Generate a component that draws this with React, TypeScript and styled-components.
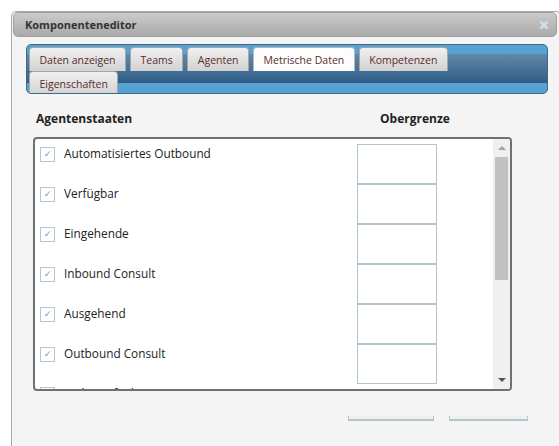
import styled, { createGlobalStyle } from "styled-components";

const GlobalStyle = createGlobalStyle`
  html, body {
    margin: 0;
    padding: 0;
    background: #fff;
    overflow: hidden;
  }
  body {
    font-family: "Open Sans", "Liberation Sans", sans-serif;
  }
`;

const Dialog = styled.div`
  margin: 11px 0 0 11px;
  width: 544px;
  height: 460px;
  padding: 0 3px 0 1px;
  box-sizing: content-box;
  border: 1px solid #a9a9a9;
  border-radius: 5px 5px 0 0;
  background: #f4f4f4;
`;

const TitleBar = styled.div`
  height: 25px;
  box-sizing: border-box;
  display: flex;
  align-items: center;
  justify-content: space-between;
  padding: 0 7px 0 11px;
  border: 1px solid #a0a0a0;
  border-radius: 5px;
  background: linear-gradient(to bottom, #cbcbcb, #a9a9a9);
`;

const Title = styled.span`
  font-size: 11px;
  font-weight: 700;
  color: #333;
`;

/* tabs wrap after "Kompetenzen" like the original widget */
const TabStrip = styled.div`
  margin: 7px 9px 0 13px;
  height: 50px;
  box-sizing: border-box;
  padding: 2px 80px 0 2px;
  border: 1px solid #3d6890;
  border-radius: 5px;
  overflow: hidden;
  display: flex;
  flex-wrap: wrap;
  align-content: flex-start;
  column-gap: 4px;
  background: linear-gradient(
    to bottom,
    #56a3d2 0,
    #56a3d2 9px,
    #6388a8 9px,
    #2f5d87 38px,
    #56a3d2 38px
  );
`;

const Tab = styled.div<{ $active?: boolean }>`
  height: 24px;
  box-sizing: border-box;
  display: flex;
  align-items: center;
  padding: 0 9.5px;
  font-size: 10.5px;
  color: #5a2b2b;
  border: 1px solid ${(p) => (p.$active ? "#b9b9b9" : "#a6a6a6")};
  border-bottom: none;
  border-radius: 4px 4px 0 0;
  background: ${(p) =>
    p.$active ? "#fdfdfd" : "linear-gradient(to bottom, #f0f0f0, #d2d2d2)"};
`;

const Content = styled.div`
  margin-left: 20px;
`;

const HeaderRow = styled.div`
  display: grid;
  grid-template-columns: 344px auto;
  padding-left: 3px;
  margin: 17px 0 10px;
  line-height: 16px;
  font-size: 12px;
  font-weight: 700;
  color: #222;
`;

const ListBox = styled.div`
  width: 479px;
  height: 254px;
  box-sizing: border-box;
  border: 2px solid #707070;
  border-radius: 4px;
  background: #fff;
  display: flex;
  overflow: hidden;
`;

const Rows = styled.div`
  flex: 1;
  padding: 5px 0 0 5px;
  overflow: hidden;
`;

const Row = styled.div`
  display: grid;
  grid-template-columns: 24px 293px 80px;
  height: 40px;
  align-items: start;
`;

const Check = styled.span`
  margin-top: 3px;
  width: 15px;
  height: 15px;
  box-sizing: border-box;
  border: 1px solid #b7c7d1;
  display: flex;
  align-items: center;
  justify-content: center;
  font-size: 9px;
  line-height: 1;
  color: #5b9bd0;
  font-family: "DejaVu Sans", sans-serif;
`;

const Label = styled.span`
  line-height: 19px;
  font-size: 11.8px;
  color: #222;
  white-space: nowrap;
`;

const Limit = styled.div`
  width: 80px;
  height: 40px;
  box-sizing: border-box;
  border: 1px solid #b3c3cc;
  background: #fff;
`;

const ScrollBar = styled.div`
  width: 17px;
  background: #f0f0f0;
  display: flex;
  flex-direction: column;
`;

const ArrowBox = styled.div`
  height: 17px;
  display: flex;
  align-items: center;
  justify-content: center;
`;

const Thumb = styled.div`
  margin: 1px 2px 0;
  height: 123px;
  background: #c1c1c1;
`;

const Spacer = styled.div`
  flex: 1;
`;

const ButtonBar = styled.div`
  display: flex;
  column-gap: 15px;
  margin: 25px 0 0 315px;
`;

const ButtonStub = styled.div<{ $width: number }>`
  width: ${(p) => p.$width}px;
  height: 5px;
  box-sizing: border-box;
  background: #efefef;
  border: 1px solid #b5c3cc;
  border-top: none;
  border-bottom-width: 2px;
`;

const tabs = [
  "Daten anzeigen",
  "Teams",
  "Agenten",
  "Metrische Daten",
  "Kompetenzen",
  "Eigenschaften",
];

const states = [
  "Automatisiertes Outbound",
  "Verfügbar",
  "Eingehende",
  "Inbound Consult",
  "Ausgehend",
  "Outbound Consult",
  "Nicht verfügbar",
];

export default function App() {
  return (
    <>
      <GlobalStyle />
      <Dialog>
        <TitleBar>
          <Title>Komponenteneditor</Title>
          <svg width="10" height="10" viewBox="0 0 10 10">
            <path
              d="M1.5 1.5 L8.5 8.5 M8.5 1.5 L1.5 8.5"
              stroke="#cddfea"
              strokeWidth="2.6"
            />
          </svg>
        </TitleBar>
        <TabStrip>
          {tabs.map((t) => (
            <Tab key={t} $active={t === "Metrische Daten"}>
              {t}
            </Tab>
          ))}
        </TabStrip>
        <Content>
          <HeaderRow>
            <span>Agentenstaaten</span>
            <span>Obergrenze</span>
          </HeaderRow>
          <ListBox>
            <Rows>
              {states.map((s, i) => (
                <Row key={s}>
                  <Check>✓</Check>
                  <Label>{s}</Label>
                  {i < 6 && <Limit />}
                </Row>
              ))}
            </Rows>
            <ScrollBar>
              <ArrowBox>
                <svg width="8" height="5" viewBox="0 0 8 5">
                  <path d="M0 5 L4 1 L8 5 Z" fill="#a3a3a3" />
                </svg>
              </ArrowBox>
              <Thumb />
              <Spacer />
              <ArrowBox>
                <svg width="8" height="5" viewBox="0 0 8 5">
                  <path d="M0 0 L8 0 L4 4 Z" fill="#505050" />
                </svg>
              </ArrowBox>
            </ScrollBar>
          </ListBox>
          <ButtonBar>
            <ButtonStub $width={86} />
            <ButtonStub $width={79} />
          </ButtonBar>
        </Content>
      </Dialog>
    </>
  );
}
